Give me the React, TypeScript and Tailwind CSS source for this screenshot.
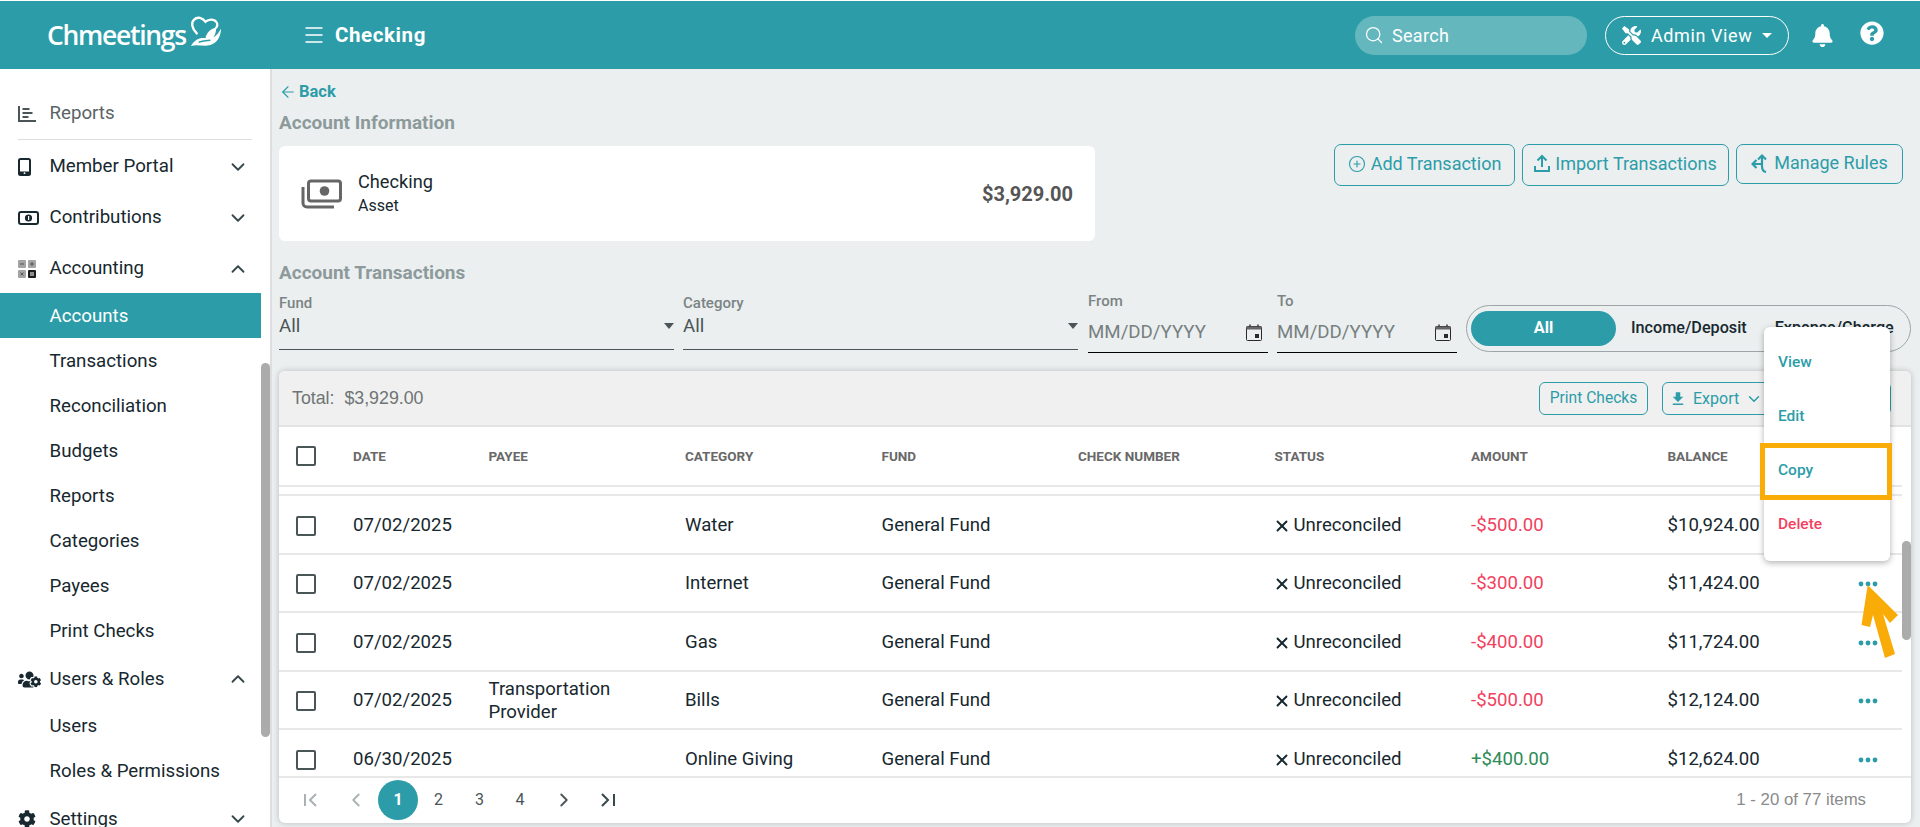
import { ChevronDown, ChevronUp, ChevronLeft, ChevronRight, ArrowLeft, Search, Menu, CirclePlus, X } from "lucide-react";
import { FaTools, FaBell, FaQuestionCircle, FaUsersCog, FaCog } from "react-icons/fa";
import { MdFileDownload, MdArrowDropDown } from "react-icons/md";

const TEAL = "#2c9da8";

const subAccounting = ["Accounts", "Transactions", "Reconciliation", "Budgets", "Reports", "Categories", "Payees", "Print Checks"];

const rows = [
  { date: "07/02/2025", payee: "", category: "Water", amount: "-$500.00", balance: "$10,924.00" },
  { date: "07/02/2025", payee: "", category: "Internet", amount: "-$300.00", balance: "$11,424.00" },
  { date: "07/02/2025", payee: "", category: "Gas", amount: "-$400.00", balance: "$11,724.00" },
  { date: "07/02/2025", payee: "Transportation Provider", category: "Bills", amount: "-$500.00", balance: "$12,124.00" },
  { date: "06/30/2025", payee: "", category: "Online Giving", amount: "+$400.00", balance: "$12,624.00" },
];

const ReportsIcon = () => (
  <svg width="18" height="16" viewBox="0 0 18 16" fill="none" stroke="#4b5558" strokeWidth="2">
    <path d="M1 0v15h17" />
    <path d="M4.5 3h7M4.5 7h10M4.5 11h6" strokeWidth="1.8" />
  </svg>
);

const PhoneIcon = () => (
  <svg width="13" height="18" viewBox="0 0 13 18">
    <rect x="1" y="1" width="11" height="16" rx="1.5" fill="none" stroke="#17282f" strokeWidth="2" />
    <rect x="1" y="13.5" width="11" height="3.5" fill="#17282f" />
    <circle cx="6.5" cy="15.2" r="0.9" fill="#fff" />
  </svg>
);

const BillIcon = () => (
  <svg width="21" height="14" viewBox="0 0 21 14">
    <rect x="1" y="1" width="19" height="12" rx="2" fill="none" stroke="#17282f" strokeWidth="2" />
    <circle cx="10.5" cy="7" r="3.6" fill="#17282f" />
    <rect x="10" y="5" width="1.2" height="4" fill="#fff" />
  </svg>
);

const CalcIcon = () => (
  <svg width="18" height="18" viewBox="0 0 18 18">
    <rect x="0" y="0" width="8" height="8" rx="1" fill="#a4a4a4" />
    <rect x="10" y="0" width="8" height="8" rx="1" fill="#a4a4a4" />
    <rect x="0" y="10" width="8" height="8" rx="1" fill="#a4a4a4" />
    <rect x="10" y="10" width="8" height="8" rx="1" fill="#1c1c1c" />
    <path d="M2 4h4M12 4h4M14 2v4M2.500 12.500l3 3M5.500 12.500l-3 3" stroke="#555" strokeWidth="1" />
    <path d="M12 13h4M12 15h4" stroke="#fff" strokeWidth="1" />
  </svg>
);

const MoneyIcon = () => (
  <svg width="41" height="30" viewBox="0 0 41 30" fill="none" stroke="#666" strokeWidth="3" className="shrink-0">
    <rect x="7.500" y="2" width="32" height="20" rx="2.500" />
    <path d="M2 8v16c0 2 1.500 4 4 4h27" />
    <circle cx="23.500" cy="12" r="4.800" fill="#666" stroke="none" />
  </svg>
);

const CalendarIcon = () => (
  <svg width="16" height="17" viewBox="0 0 16 17" fill="none" stroke="#2a2a2a" strokeWidth="1">
    <rect x="0.5" y="2.5" width="15" height="14" rx="1" />
    <path d="M4 0.5v3M12 0.5v3" strokeWidth="1.4" />
    <rect x="0.5" y="2.5" width="15" height="3" fill="#666" stroke="none" />
    <rect x="9" y="10" width="4" height="4" fill="#2a2a2a" stroke="none" />
  </svg>
);

const UploadIcon = () => (
  <svg width="16" height="19" viewBox="0 0 16 19" fill="none" stroke={TEAL} strokeWidth="2" className="shrink-0">
    <path d="M8 13V2M3.500 6.500 8 2l4.500 4.500" />
    <path d="M1 12v5h14v-5" />
  </svg>
);

const RulesIcon = () => (
  <svg width="18" height="20" viewBox="0 0 18 20" fill="none" stroke={TEAL} strokeWidth="2.2" className="shrink-0">
    <path d="M15 19c-2.500-.500-4-3-4-6V2.500" />
    <path d="M7 6.500 11 2.500l4 4" />
    <path d="M11 11H2M5.500 7 1.500 11l4 4" />
  </svg>
);

const LogoMark = () => (
  <svg width="33" height="35" viewBox="0 0 34 36" fill="none">
    <path d="M8 20C3 15 2 9 5 6c4-4 9-2 12 2 3-3 9-3 11 0 2 2 1 5 0 6" stroke="#fff" strokeWidth="2.400" strokeLinecap="round" />
    <path d="M2 33c4-7 10-9 15-8 1-6 6-10 11-11 0 4-1 8-3 10 3-1 6-5 8-9 0 8-4 15-11 17-7 2-13-1-20 1z" fill="#fff" />
    <path d="M10 29c4-1 8-2 12-2" stroke={TEAL} strokeWidth="1.600" />
  </svg>
);

const Dots = () => (
  <svg width="20" height="6" viewBox="0 0 20 6" fill={TEAL}>
    <circle cx="3" cy="3" r="2.400" />
    <circle cx="10" cy="3" r="2.400" />
    <circle cx="17" cy="3" r="2.400" />
  </svg>
);

const Checkbox = () => <div className="w-[20px] h-[20px] rounded-[2px] border-2 border-[#4a5558] bg-white" />;

const NavRow = ({ icon, label, open, h, dim }: { icon: React.ReactNode; label: string; open?: boolean; h: string; dim?: boolean }) => (
  <div className={`flex items-center pl-[18px] pr-[12px] ${dim ? "" : "pt-[2px]"} ${h}`}>
    <span className="w-[31.5px] flex items-center">{icon}</span>
    <span className={`flex-1 text-[18.7px] ${dim ? "text-[#5a6466]" : "text-[#17282f]"}`}>{label}</span>
    {open === undefined ? null : open ? (
      <ChevronUp size={22} strokeWidth={2} className="text-[#37474c]" />
    ) : (
      <ChevronDown size={22} strokeWidth={2} className="text-[#37474c]" />
    )}
  </div>
);

const Sidebar = () => (
  <aside className="relative w-[270px] shrink-0 bg-white pt-[22px] overflow-hidden">
    <NavRow icon={<ReportsIcon />} label="Reports" h="h-[45px]" dim />
    <div className="mt-[3px] mx-[18px] h-px bg-[#dddddd]" />
    <div className="w-[261px]">
      <NavRow icon={<PhoneIcon />} label="Member Portal" open={false} h="h-[51px]" />
      <NavRow icon={<BillIcon />} label="Contributions" open={false} h="h-[51px]" />
      <NavRow icon={<CalcIcon />} label="Accounting" open={true} h="h-[51px]" />
      {subAccounting.map((s, i) => (
        <div
          key={s}
          className={`h-[45px] pl-[49.5px] pt-[2px] flex items-center text-[18.7px] ${i === 0 ? "bg-[#2c9da8] text-white" : "text-[#17282f]"}`}
        >
          {s}
        </div>
      ))}
      <NavRow icon={<FaUsersCog size={23} color="#17282f" />} label="Users & Roles" open={true} h="h-[50px]" />
      <div className="h-[45px] pl-[49.5px] pt-[2px] flex items-center text-[18.7px] text-[#17282f]">Users</div>
      <div className="h-[45px] pl-[49.5px] pt-[2px] flex items-center text-[18.7px] text-[#17282f]">Roles &amp; Permissions</div>
      <NavRow icon={<FaCog size={18} color="#17282f" />} label="Settings" open={false} h="h-[50px]" />
    </div>
    {/* sidebar scrollbar */}
    <div className="absolute left-[261px] top-[294px] w-[9px] h-[374px] rounded-full bg-[#ababab]" />
  </aside>
);

const TopBar = () => (
  <header className="h-[68px] bg-[#2c9da8] flex items-center text-white shrink-0">
    <div className="w-[302px] pl-[47px] flex items-center">
      <span className="font-['Open_Sans',sans-serif] font-semibold text-[26.5px] tracking-[-1.3px] leading-none">Chmeetings</span>
      <span className="-mt-[7px] ml-[3px]"><LogoMark /></span>
    </div>
    <Menu size={24} strokeWidth={1.5} />
    <span className="ml-[9px] text-[20.5px] font-bold tracking-[0.6px]">Checking</span>
    <div className="flex-1" />
    <div className="w-[232px] h-[39px] rounded-full bg-[#65b7be] flex items-center pl-[9px]">
      <Search size={20} strokeWidth={1.5} />
      <span className="ml-[8px] text-[18px] tracking-[0.3px]">Search</span>
    </div>
    <div className="ml-[18px] w-[184px] h-[39px] rounded-full border border-white flex items-center pl-[16px]">
      <FaTools size={19} />
      <span className="ml-[10px] text-[18px] tracking-[0.6px]">Admin View</span>
      <MdArrowDropDown size={24} className="ml-[3px]" />
    </div>
    <FaBell size={23} className="ml-[22px]" />
    <FaQuestionCircle size={24} className="ml-[26px] mr-[36px] -mt-[4px]" />
  </header>
);

const ActionBtn = ({ icon, label, w, h }: { icon: React.ReactNode; label: string; w: string; h: string }) => (
  <div className={`flex items-center justify-center gap-[5px] pb-[3px] border border-[#2c9da8] rounded-[7px] text-[#2c9da8] text-[18px] ${w} ${h}`}>
    {icon}
    <span>{label}</span>
  </div>
);

const SelectField = ({ label }: { label: string }) => (
  <div className="w-[395px] h-[55px] border-b border-[#4a5558]">
    <div className="text-[15px] leading-[16px] font-medium text-[#7b8484]">{label}</div>
    <div className="mt-[5px] flex items-center justify-between text-[18.7px] leading-[20px] text-[#4a5558]">
      <span>All</span>
      <span className="w-0 h-0 border-x-[5px] border-x-transparent border-t-[6px] border-t-[#4a5558]" />
    </div>
  </div>
);

const DateField = ({ label }: { label: string }) => (
  <div className="w-[180px] h-[58px] border-b-[1.5px] border-black">
    <div className="-mt-[2px] text-[15px] leading-[16px] font-medium text-[#7b8484]">{label}</div>
    <div className="mt-[13px] flex items-center justify-between text-[18.7px] leading-[20px] text-[#777f80] pr-[6px]">
      <span>MM/DD/YYYY</span>
      <CalendarIcon />
    </div>
  </div>
);

const gridCols = "grid grid-cols-[74px_135.5px_196.5px_196.5px_196.5px_196.5px_196.5px_196.5px_190px_1fr] items-center";

const Table = () => (
  <div className="mt-[18px] h-[452px] mr-[9px] bg-white rounded-md shadow-[0_0_6px_rgba(0,0,0,0.22)] overflow-hidden relative">
    <div className="h-[56px] bg-[#f0f0f0] border-b-2 border-[#e3e3e3] flex items-center pl-[13px] pr-[20px]">
      <span className="font-['Liberation_Sans',sans-serif] text-[17.8px] text-[#6f7474] whitespace-pre">Total:  $3,929.00</span>
      <div className="flex-1" />
      <div className="w-[109px] h-[33px] pt-px border border-[#2c9da8] rounded-[6px] flex items-center justify-center text-[#2c9da8] text-[15.6px]">Print Checks</div>
      <div className="ml-[14px] w-[110px] h-[33px] pt-px border border-[#2c9da8] rounded-[6px] flex items-center pl-[6px] text-[#2c9da8] text-[16px]">
        <MdFileDownload size={18} />
        <span className="ml-[6px]">Export</span>
        <ChevronDown size={18} className="ml-[6px]" />
      </div>
      <div className="ml-[8px] w-[111px] h-[33px] border border-[#2c9da8] rounded-[6px]" />
    </div>
    <div className="mr-[9px]">
      <div className={`${gridCols} h-[60px] border-b-2 border-[#e8e8e8] text-[13.5px] font-bold text-[#686868]`}>
        <div className="pl-[17px]"><Checkbox /></div>
        <div>DATE</div>
        <div>PAYEE</div>
        <div>CATEGORY</div>
        <div>FUND</div>
        <div>CHECK NUMBER</div>
        <div>STATUS</div>
        <div>AMOUNT</div>
        <div>BALANCE</div>
      </div>
      <div className="h-[9px] border-b-2 border-[#e8e8e8]" />
      <div className="h-[280px] overflow-hidden">
        {rows.map((r, i) => (
          <div key={i} className={`${gridCols} h-[58.5px] pt-[3px] border-b-2 border-[#e8e8e8] text-[18.6px] text-[#17282f]`}>
            <div className="pl-[17px]"><Checkbox /></div>
            <div>{r.date}</div>
            <div className="leading-[23px] pr-[40px]">{r.payee}</div>
            <div>{r.category}</div>
            <div>General Fund</div>
            <div />
            <div className="flex items-center">
              <X size={18} strokeWidth={2.5} className="-ml-[2px] mr-[3px]" />
              Unreconciled
            </div>
            <div className={r.amount.startsWith("+") ? "text-[#2e8b57]" : "text-[#f2415e]"}>{r.amount}</div>
            <div>{r.balance}</div>
            <div className="flex justify-end pr-[24px]"><Dots /></div>
          </div>
        ))}
      </div>
    </div>
    <div className="h-[46px] border-t-2 border-[#e8e8e8] flex items-center pl-[24px] text-[#4a5558]">
      <svg width="16" height="16" viewBox="0 0 16 16" fill="none" stroke="#a9b1b3" strokeWidth="2"><path d="M2 2v12M13 2 7 8l6 6" /></svg>
      <ChevronLeft size={22} strokeWidth={2} className="ml-[26px] text-[#a9b1b3]" />
      <div className="ml-[11px] w-[40px] h-[40px] rounded-full bg-[#2c9da8] text-white font-bold text-[16px] flex items-center justify-center">1</div>
      <div className="w-[41px] text-center text-[16px]">2</div>
      <div className="w-[41px] text-center text-[16px]">3</div>
      <div className="w-[40px] text-center text-[16px]">4</div>
      <ChevronRight size={22} strokeWidth={2} className="ml-[13px]" />
      <svg width="17" height="16" viewBox="0 0 17 16" fill="none" stroke="#37474c" strokeWidth="2" className="ml-[24px]"><path d="M3 2l6 6-6 6M15 2v12" /></svg>
      <div className="flex-1" />
      <span className="font-['Liberation_Sans',sans-serif] text-[16.8px] text-[#8a8a8a] mr-[45px]">1 - 20 of 77 items</span>
    </div>
    {/* table scrollbar */}
    <div className="absolute right-0 top-[170px] w-[9px] h-[99px] rounded-full bg-[#ababab]" />
  </div>
);

const ActionMenu = () => (
  <>
    <div className="absolute left-[1764px] top-[327px] w-[126px] h-[234px] bg-white rounded-md shadow-[0_2px_6px_rgba(0,0,0,0.3)] pt-[9px] text-[15.5px] font-medium">
      <div className="h-[54px] pl-[14px] flex items-center text-[#2c9da8]">View</div>
      <div className="h-[54px] pl-[14px] flex items-center text-[#2c9da8]">Edit</div>
      <div className="h-[54px] pl-[14px] flex items-center text-[#2c9da8]">Copy</div>
      <div className="h-[54px] pl-[14px] flex items-center text-[#f2415e]">Delete</div>
    </div>
    <div className="absolute left-[1760px] top-[443px] w-[132px] h-[57px] border-[5px] border-[#f9ac07]" />
    {/* annotation arrow */}
    <svg className="absolute left-[1860px] top-[580px]" width="40" height="82" viewBox="0 0 40 82" fill="#f9ac07">
      <path d="M7.700 5 38 35 30 43 23 34 35 74 25 78 13 35 10 47 1.500 45z" />
    </svg>
  </>
);

export default function App() {
  return (
    <div className="relative h-[827px] w-full overflow-hidden bg-white pt-px font-[Roboto,sans-serif] flex flex-col">
      <TopBar />
      <div className="flex flex-1 min-h-0">
        <Sidebar />
        <main className="flex-1 bg-[#ebeff0] border-l-2 border-[#dcdfe0] pl-[7px]">
          <div className="pt-[14px] h-[32px] flex items-center text-[#2c9da8] text-[16.5px] font-bold">
            <ArrowLeft size={18} strokeWidth={1.5} className="mr-[2px]" />
            Back
          </div>
          <div className="mt-[10px] h-[24px] flex items-center text-[19px] font-bold text-[#8d9a9b]">Account Information</div>
          <div className="mt-[11px] flex items-start">
            <div className="w-[816px] h-[95px] bg-white rounded-md flex items-center pl-[22px] pr-[22px]">
              <MoneyIcon />
              <div className="ml-[16px] flex-1">
                <div className="text-[18.2px] leading-[24px] text-[#17282f]">Checking</div>
                <div className="text-[16px] leading-[24px] text-[#17282f]">Asset</div>
              </div>
              <span className="text-[20px] font-bold text-[#555]">$3,929.00</span>
            </div>
            <div className="flex-1 flex justify-end gap-[7px] mr-[17px] -mt-[2px]">
              <ActionBtn icon={<CirclePlus size={18} strokeWidth={1.5} />} label="Add Transaction" w="w-[181px]" h="h-[42px]" />
              <ActionBtn icon={<UploadIcon />} label="Import Transactions" w="w-[207px]" h="h-[42px]" />
              <ActionBtn icon={<RulesIcon />} label="Manage Rules" w="w-[167px]" h="h-[40px]" />
            </div>
          </div>
          <div className="mt-[20px] h-[24px] flex items-center text-[19px] font-bold text-[#8d9a9b]">Account Transactions</div>
          <div className="mt-[10px] flex items-start">
            <SelectField label="Fund" />
            <div className="w-[9px]" />
            <SelectField label="Category" />
            <div className="w-[10px]" />
            <DateField label="From" />
            <div className="w-[9px]" />
            <DateField label="To" />
            <div className="ml-[9px] mt-[10px] w-[445px] h-[47px] rounded-full border border-[#9ea5a6] flex items-center pl-[4px] text-[16.2px] font-medium text-[#17282f]">
              <div className="w-[145px] h-[35px] rounded-full bg-[#2c9da8] text-white font-bold flex items-center justify-center">All</div>
              <span className="ml-[15px]">Income/Deposit</span>
              <span className="ml-[28px]">Expense/Charge</span>
            </div>
          </div>
          <Table />
        </main>
      </div>
      <ActionMenu />
    </div>
  );
}
